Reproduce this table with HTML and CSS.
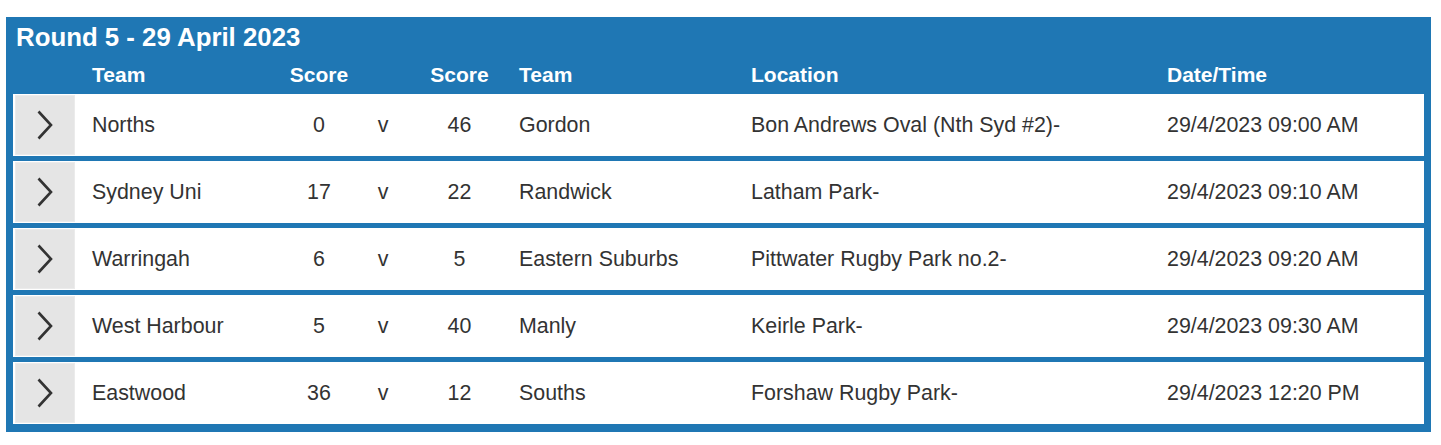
FILE: index.html
```html
<!DOCTYPE html>
<html lang="en">
<head>
<meta charset="utf-8">
<title>Round 5 - 29 April 2023</title>
<link rel="stylesheet" href="styles.css">
</head>
<body>
<section class="fixtures">
  <h2 class="fixtures-title">Round 5 - 29 April 2023</h2>
  <div class="grid head">
    <div></div>
    <div class="cell">Team</div>
    <div class="score">Score</div>
    <div class="vs"></div>
    <div class="score">Score</div>
    <div class="cell">Team</div>
    <div class="cell">Location</div>
    <div class="cell">Date/Time</div>
  </div>
  <div class="rows">
    <div class="grid row">
      <div class="expand"><svg viewBox="0 0 16 30" width="16" height="30"><polyline points="1.5,1.5 14,15 1.5,28.5" fill="none" stroke="#333" stroke-width="2.6"/></svg></div>
      <div class="cell">Norths</div><div class="score">0</div><div class="vs">v</div><div class="score">46</div>
      <div class="cell">Gordon</div><div class="cell">Bon Andrews Oval (Nth Syd #2)-</div><div class="cell">29/4/2023 09:00 AM</div>
    </div>
    <div class="grid row">
      <div class="expand"><svg viewBox="0 0 16 30" width="16" height="30"><polyline points="1.5,1.5 14,15 1.5,28.5" fill="none" stroke="#333" stroke-width="2.6"/></svg></div>
      <div class="cell">Sydney Uni</div><div class="score">17</div><div class="vs">v</div><div class="score">22</div>
      <div class="cell">Randwick</div><div class="cell">Latham Park-</div><div class="cell">29/4/2023 09:10 AM</div>
    </div>
    <div class="grid row">
      <div class="expand"><svg viewBox="0 0 16 30" width="16" height="30"><polyline points="1.5,1.5 14,15 1.5,28.5" fill="none" stroke="#333" stroke-width="2.6"/></svg></div>
      <div class="cell">Warringah</div><div class="score">6</div><div class="vs">v</div><div class="score">5</div>
      <div class="cell">Eastern Suburbs</div><div class="cell">Pittwater Rugby Park no.2-</div><div class="cell">29/4/2023 09:20 AM</div>
    </div>
    <div class="grid row">
      <div class="expand"><svg viewBox="0 0 16 30" width="16" height="30"><polyline points="1.5,1.5 14,15 1.5,28.5" fill="none" stroke="#333" stroke-width="2.6"/></svg></div>
      <div class="cell">West Harbour</div><div class="score">5</div><div class="vs">v</div><div class="score">40</div>
      <div class="cell">Manly</div><div class="cell">Keirle Park-</div><div class="cell">29/4/2023 09:30 AM</div>
    </div>
    <div class="grid row">
      <div class="expand"><svg viewBox="0 0 16 30" width="16" height="30"><polyline points="1.5,1.5 14,15 1.5,28.5" fill="none" stroke="#333" stroke-width="2.6"/></svg></div>
      <div class="cell">Eastwood</div><div class="score">36</div><div class="vs">v</div><div class="score">12</div>
      <div class="cell">Souths</div><div class="cell">Forshaw Rugby Park-</div><div class="cell">29/4/2023 12:20 PM</div>
    </div>
  </div>
</section>
</body>
</html>
```

FILE: styles.css
```css
html, body {
  margin: 0;
  padding: 0;
  background: #ffffff;
}

body {
  font-family: "Liberation Sans", Arial, sans-serif;
  color: #333333;
}

.fixtures {
  margin: 17px 10px 0 6px;
  padding: 5px 7px 8px;
  background: #1f77b4;
}

.fixtures-title {
  margin: 0;
  padding-left: 3px;
  font-size: 25.8px;
  line-height: 30px;
  font-weight: 700;
  color: #ffffff;
}

.grid {
  display: grid;
  grid-template-columns: 60px 214px 60px 68px 85px 232px 416px 1fr;
  align-items: center;
  font-size: 21px;
}

.head {
  padding: 4px 2px 0;
  line-height: 38px;
  font-weight: 700;
  color: #ffffff;
}

.rows {
  display: flex;
  flex-direction: column;
  gap: 5px;
}

.row {
  background: #ffffff;
  padding: 1px 2px;
  font-size: 21.4px;
}

.cell {
  padding-left: 17px;
  white-space: nowrap;
}

.score,
.vs {
  text-align: center;
}

.expand {
  height: 58px;
  background: #e5e5e5;
  border: 1px solid #ebebeb;
  display: flex;
  align-items: center;
  justify-content: center;
}

.expand svg {
  display: block;
  margin-left: -1px;
}
```
